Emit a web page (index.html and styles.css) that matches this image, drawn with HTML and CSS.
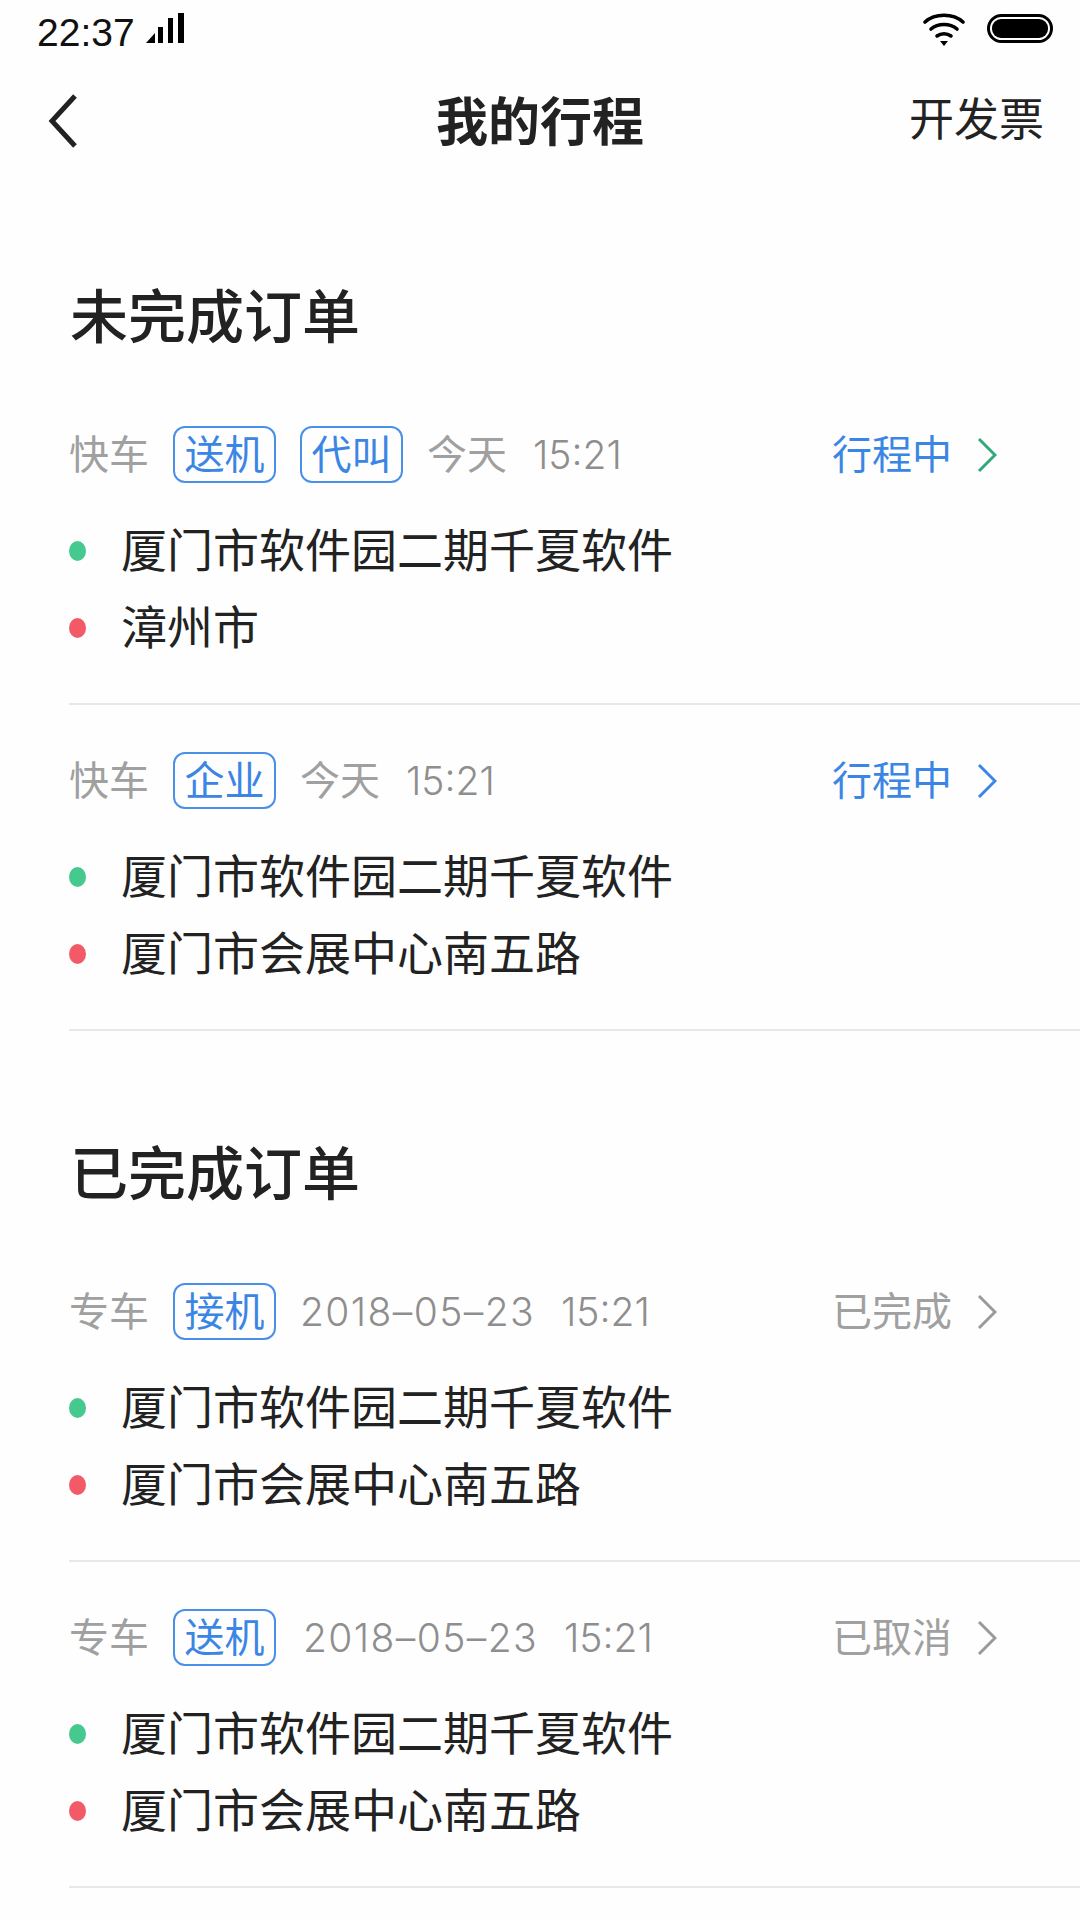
FILE: index.html
```html
<!DOCTYPE html>
<html lang="zh-CN">

<head>
  <meta charset="utf-8">
  <title>我的行程</title>
  <link rel="stylesheet" href="styles.css">
</head>

<body>
  <div class="statusbar">
    <div class="status-left">
      <span class="clock">22:37</span>
      <svg class="signal" width="38" height="30" viewBox="0 0 38 30">
        <path d="M0 30 L9 20 V30 Z" fill="#000"/>
        <rect x="12" y="14" width="5" height="16" fill="#000"/>
        <rect x="22" y="5" width="5" height="25" fill="#000"/>
        <rect x="32" y="0" width="6" height="30" fill="#000"/>
      </svg>
    </div>
    <div class="status-right">
      <svg class="wifi" width="42" height="34" viewBox="0 0 42 34">
        <g fill="none" stroke="#000" stroke-width="3.6" stroke-linecap="round">
          <path d="M2 10 C12 1 30 1 40 10"/>
          <path d="M8 17 C15 11 27 11 34 17"/>
          <path d="M14 24 C18 21 24 21 28 24"/>
        </g>
        <path d="M17 29 H25 L21 34 Z" fill="#000"/>
      </svg>
      <div class="battery"><div class="battery-fill"></div></div>
    </div>
  </div>

  <nav class="navbar">
    <svg class="back" width="32" height="54" viewBox="0 0 32 54">
      <path d="M28 2 L5 27 L28 52" fill="none" stroke="#222" stroke-width="5"/>
    </svg>
    <h1 class="navtitle">我的行程</h1>
    <a class="navlink">开发票</a>
  </nav>

  <main>
    <section class="group">
      <h2 class="group-title">未完成订单</h2>

      <div class="order">
        <div class="meta">
          <span class="kind">快车</span>
          <span class="tag">送机</span>
          <span class="tag">代叫</span>
          <span class="date">今天</span>
          <span class="time">15:21</span>
          <span class="state state-active">行程中</span>
          <svg class="chev" width="20" height="36" viewBox="0 0 20 36"><path d="M2 2 L18 18 L2 34" stroke="#2fa87a"/></svg>
        </div>
        <div class="addr"><i class="dot dot-from"></i>厦门市软件园二期千夏软件</div>
        <div class="addr"><i class="dot dot-to"></i>漳州市</div>
      </div>

      <div class="order">
        <div class="meta">
          <span class="kind">快车</span>
          <span class="tag">企业</span>
          <span class="date">今天</span>
          <span class="time">15:21</span>
          <span class="state state-active">行程中</span>
          <svg class="chev" width="20" height="36" viewBox="0 0 20 36"><path d="M2 2 L18 18 L2 34" stroke="#3b86e4"/></svg>
        </div>
        <div class="addr"><i class="dot dot-from"></i>厦门市软件园二期千夏软件</div>
        <div class="addr"><i class="dot dot-to"></i>厦门市会展中心南五路</div>
      </div>
    </section>

    <section class="group">
      <h2 class="group-title">已完成订单</h2>

      <div class="order">
        <div class="meta">
          <span class="kind">专车</span>
          <span class="tag">接机</span>
          <span class="date date-num">2018–05–23</span>
          <span class="time">15:21</span>
          <span class="state">已完成</span>
          <svg class="chev" width="20" height="36" viewBox="0 0 20 36"><path d="M2 2 L18 18 L2 34" stroke="#999"/></svg>
        </div>
        <div class="addr"><i class="dot dot-from"></i>厦门市软件园二期千夏软件</div>
        <div class="addr"><i class="dot dot-to"></i>厦门市会展中心南五路</div>
      </div>

      <div class="order">
        <div class="meta">
          <span class="kind">专车</span>
          <span class="tag">送机</span>
          <span class="date date-num date-wide">2018–05–23</span>
          <span class="time">15:21</span>
          <span class="state">已取消</span>
          <svg class="chev" width="20" height="36" viewBox="0 0 20 36"><path d="M2 2 L18 18 L2 34" stroke="#999"/></svg>
        </div>
        <div class="addr"><i class="dot dot-from"></i>厦门市软件园二期千夏软件</div>
        <div class="addr"><i class="dot dot-to"></i>厦门市会展中心南五路</div>
      </div>
    </section>
  </main>
</body>

</html>
```

FILE: styles.css
```css
html {
  background-color: #fefefe;
  color: #222222;
}

body {
  margin: 0;
  height: 1920px;
  overflow: hidden;
  font-family: "Noto Sans CJK SC", "Noto Sans", sans-serif;
}

.statusbar {
  height: 68px;
  padding: 11px 27px 0 37px;
  box-sizing: border-box;
  display: flex;
  justify-content: space-between;
  align-items: flex-start;
}

.status-left {
  display: flex;
  align-items: flex-start;
}

.clock {
  font-family: "Liberation Sans", sans-serif;
  font-size: 39px;
  line-height: 44px;
  color: #111111;
}

.signal {
  margin: 2px 0 0 11px;
}

.status-right {
  display: flex;
  align-items: flex-start;
  gap: 22px;
}

.wifi {
  margin-top: 1px;
}

.battery {
  width: 66px;
  height: 29px;
  margin-top: 3px;
  box-sizing: border-box;
  border: 3px solid #000000;
  border-radius: 15px;
  padding: 2px;
}

.battery-fill {
  height: 100%;
  background-color: #000000;
  border-radius: 9px;
}

.navbar {
  height: 106px;
  padding: 0 36px;
  display: grid;
  grid-template-columns: 1fr auto 1fr;
  align-items: center;
}

.back {
  margin-left: 11px;
}

.navtitle {
  margin: 0;
  padding-bottom: 5px;
  font-size: 52px;
  font-weight: 700;
  color: #222222;
}

.navlink {
  justify-self: end;
  padding-bottom: 9px;
  font-size: 45px;
  color: #222222;
}

.group {
  padding-top: 99px;
}

.group-title {
  margin: 0 0 26px 70px;
  height: 80px;
  line-height: 80px;
  font-size: 58px;
  font-weight: 500;
  color: #222222;
}

.order {
  margin-left: 69px;
  height: 326px;
  box-sizing: border-box;
  padding-top: 47px;
  border-bottom: 2px solid #e8e8e8;
}

.meta {
  height: 57px;
  margin-bottom: 29px;
  padding-right: 83px;
  display: flex;
  align-items: center;
  font-size: 40px;
  color: #a0a0a0;
}

.kind {
  margin-right: 24px;
  padding-bottom: 5px;
}

.tag {
  width: 103px;
  height: 57px;
  margin-right: 24px;
  padding-bottom: 5px;
  box-sizing: border-box;
  border: 2px solid #4a90e8;
  border-radius: 12px;
  display: flex;
  align-items: center;
  justify-content: center;
  font-size: 40px;
  color: #3b86e4;
}

.date {
  padding-bottom: 5px;
}

.date-num,
.time {
  font-family: Inter, "Liberation Sans", sans-serif;
  font-size: 39px;
  font-weight: 300;
  color: #8e8e8e;
  padding-bottom: 0;
}

.date-num {
  letter-spacing: 1.4px;
}

.date-wide {
  margin-left: 3px;
}

.time {
  margin-left: 26px;
}

.state {
  margin-left: auto;
  padding-bottom: 5px;
}

.state-active {
  color: #3b86e4;
}

.chev {
  margin-left: 25px;
}

.chev path {
  fill: none;
  stroke-width: 3;
}

.addr {
  height: 77px;
  padding-bottom: 8px;
  box-sizing: border-box;
  display: flex;
  align-items: center;
  font-size: 46px;
  color: #222222;
}

.dot {
  width: 17px;
  height: 20px;
  margin-top: 8px;
  margin-right: 35px;
  border-radius: 50%;
}

.dot-from {
  background-color: #45c98f;
}

.dot-to {
  background-color: #f25a68;
}
```
